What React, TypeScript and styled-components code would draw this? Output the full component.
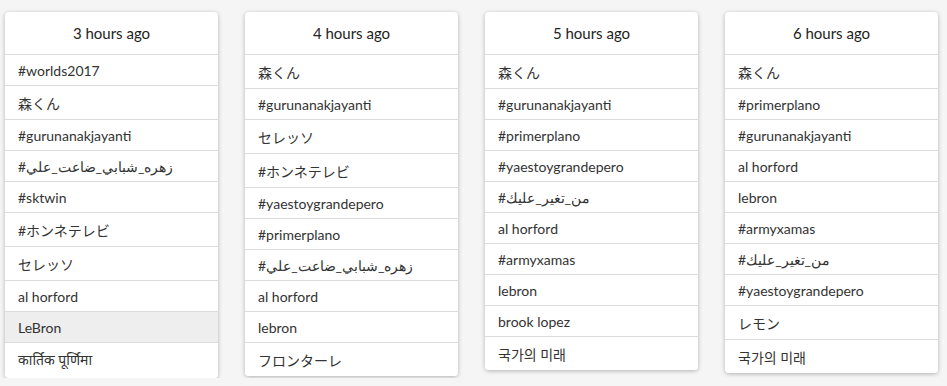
import styled, { createGlobalStyle } from "styled-components";

const GlobalStyle = createGlobalStyle`
	html, body {
		margin: 0;
		padding: 0;
		background: #f5f5f5;
	}
	body {
		font-family: Lato, "Noto Sans CJK JP", "Noto Sans CJK KR", "Noto Sans", sans-serif;
		color: #333;
	}
`;

const Board = styled.div`
	display: flex;
	align-items: flex-start;
	gap: 27px;
	padding: 12px 0 0 5px;
`;

const Card = styled.section`
	width: 213px;
	background: #fff;
	border-radius: 4px;
	box-shadow: 0 1px 4px rgba(0, 0, 0, 0.28);
	overflow: hidden;
`;

const Header = styled.div`
	height: 42px;
	display: flex;
	align-items: center;
	justify-content: center;
	font-size: 15px;
	color: #222;
	border-bottom: 1px solid #dcdcdc;
`;

const List = styled.ul`
	list-style: none;
	margin: 0;
	padding: 0;
`;

const Item = styled.li<{ $active?: boolean; $tall?: boolean }>`
	padding: 7px 12px ${(p) => (p.$tall ? "9px" : "6px")} 13px;
	font-size: 14px;
	line-height: normal;
	white-space: nowrap;
	background: ${(p) => (p.$active ? "#eeeeee" : "#fff")};
	& + & {
		border-top: 1px solid #dcdcdc;
	}
`;

type Column = {
	label: string;
	trends: string[];
	active?: number;
};

const columns: Column[] = [
	{
		label: "3 hours ago",
		trends: [
			"#worlds2017",
			"森くん",
			"#gurunanakjayanti",
			"#زهره_شبابي_ضاعت_علي",
			"#sktwin",
			"#ホンネテレビ",
			"セレッソ",
			"al horford",
			"LeBron",
			"कार्तिक पूर्णिमा",
		],
		active: 8,
	},
	{
		label: "4 hours ago",
		trends: [
			"森くん",
			"#gurunanakjayanti",
			"セレッソ",
			"#ホンネテレビ",
			"#yaestoygrandepero",
			"#primerplano",
			"#زهره_شبابي_ضاعت_علي",
			"al horford",
			"lebron",
			"フロンターレ",
		],
	},
	{
		label: "5 hours ago",
		trends: [
			"森くん",
			"#gurunanakjayanti",
			"#primerplano",
			"#yaestoygrandepero",
			"#من_تغير_عليك",
			"al horford",
			"#armyxamas",
			"lebron",
			"brook lopez",
			"국가의 미래",
		],
	},
	{
		label: "6 hours ago",
		trends: [
			"森くん",
			"#primerplano",
			"#gurunanakjayanti",
			"al horford",
			"lebron",
			"#armyxamas",
			"#من_تغير_عليك",
			"#yaestoygrandepero",
			"レモン",
			"국가의 미래",
		],
	},
];

// devanagari sits a bit taller than the other rows
const isTall = (t: string) => /[\u0900-\u097F]/.test(t);

export default function App() {
	return (
		<>
			<GlobalStyle />
			<Board>
				{columns.map((col) => (
					<Card key={col.label}>
						<Header>{col.label}</Header>
						<List>
							{col.trends.map((t, i) => (
								<Item key={t + i} $tall={isTall(t)} $active={col.active === i}>
									{t}
								</Item>
							))}
						</List>
					</Card>
				))}
			</Board>
		</>
	);
}
